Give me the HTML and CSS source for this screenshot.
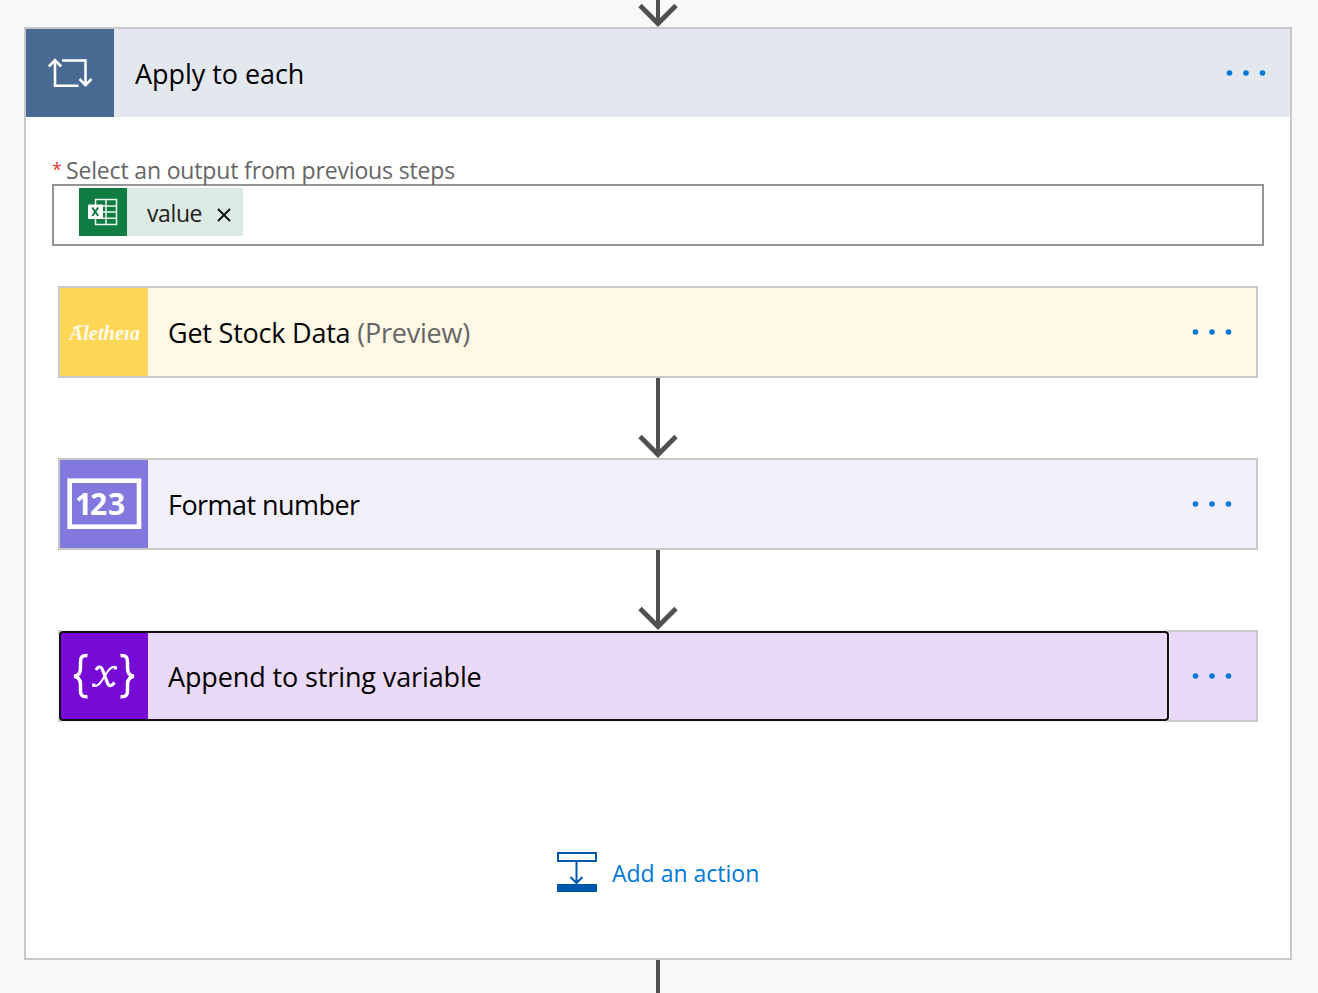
FILE: index.html
```html
<!DOCTYPE html>
<html lang="en">
<head>
<meta charset="utf-8">
<title>Flow designer</title>
<link rel="stylesheet" href="styles.css">
</head>
<body>
<main class="flow">
  <svg class="arrow arrow-in" width="40" height="27" viewBox="0 53 40 27"><path d="M20 0V76"/><path class="head" d="M2 58.500L20 76.500L38 58.500"/></svg>
  <section class="scope">
    <header class="scope-header">
      <div class="tile tile-loop">
        <svg width="88" height="88" viewBox="0 0 88 88" fill="none" stroke="#fff" stroke-width="2.600"><path d="M36 31.500H59.500V56M53.500 50L59.500 56.200L65.500 50M52.500 56.700H29V32M22.800 37.500L29 31.200L35.200 37.500"/></svg>
      </div>
      <h1 class="title t-apply">Apply to each</h1>
      <svg class="dots" width="40" height="8" viewBox="0 0 40 8"><circle cx="3.500" cy="4" r="2.800"/><circle cx="20" cy="4" r="2.800"/><circle cx="36.500" cy="4" r="2.800"/></svg>
    </header>
    <div class="scope-body">
      <div class="label"><span class="required">*</span><span class="label-text">Select an output from previous steps</span></div>
      <div class="input">
        <div class="token">
          <svg class="excel" width="48" height="48" viewBox="0 0 48 48">
            <rect width="48" height="48" fill="#107c41"/>
            <path d="M16.500 11.500H37.500V36.500H16.500ZM16.500 18H37.500M16.500 24H37.500M16.500 30.300H37.500M27 11.500V36.500" fill="none" stroke="#e9f5ed" stroke-width="1.500"/>
            <rect x="9" y="16.500" width="15" height="14.500" rx="1" fill="#fff"/>
            <path d="M13.300 19.500L19.200 28M19.200 19.500L13.300 28" stroke="#107c41" stroke-width="2"/>
          </svg>
          <span class="token-text">value</span>
          <svg class="close" width="14" height="14" viewBox="0 0 14 14"><path d="M1 1L13 13M13 1L1 13" stroke="#111" stroke-width="1.900"/></svg>
        </div>
      </div>
      <div class="steps">
        <article class="card card-stock">
          <div class="tile tile-stock"><svg width="88" height="88" viewBox="0 0 88 88"><path d="M13.500 41C14 38.300 17 37.600 23.500 38.200" fill="none" stroke="#fffbea" stroke-width="1.500"/><text class="logo" x="9.500" y="51.500" textLength="70.500" lengthAdjust="spacingAndGlyphs">Aletheıa</text></svg></div>
          <h2 class="title t-stock">Get Stock Data <span class="preview">(Preview)</span></h2>
          <svg class="dots" width="40" height="8" viewBox="0 0 40 8"><circle cx="3.500" cy="4" r="2.800"/><circle cx="20" cy="4" r="2.800"/><circle cx="36.500" cy="4" r="2.800"/></svg>
        </article>
        <svg class="arrow" width="40" height="80" viewBox="0 0 40 80"><path d="M20 0V76"/><path class="head" d="M2 58.500L20 76.500L38 58.500"/></svg>
        <article class="card card-format">
          <div class="tile tile-format"><svg width="88" height="88" viewBox="0 0 88 88"><rect x="9.700" y="20.700" width="69.300" height="46" fill="none" stroke="#fff" stroke-width="4.600"/><text class="digits" x="15 30 48" y="54.500">123</text></svg></div>
          <h2 class="title t-format">Format number</h2>
          <svg class="dots" width="40" height="8" viewBox="0 0 40 8"><circle cx="3.500" cy="4" r="2.800"/><circle cx="20" cy="4" r="2.800"/><circle cx="36.500" cy="4" r="2.800"/></svg>
        </article>
        <svg class="arrow" width="40" height="80" viewBox="0 0 40 80"><path d="M20 0V76"/><path class="head" d="M2 58.500L20 76.500L38 58.500"/></svg>
        <article class="card card-append">
          <div class="tile tile-append">
            <svg width="88" height="88" viewBox="0 0 88 88" fill="none" stroke="#fff">
              <path d="M27.500 23.500C21.500 23.200 20.500 25.500 20.500 30V36C20.500 41 19 43.800 14 44.200C19 44.800 20.500 47.500 20.500 52.500V58.500C20.500 63 21.500 65 27.500 64.700M60.500 23.500C66.500 23.200 67.500 25.500 67.500 30V36C67.500 41 69 43.800 74 44.200C69 44.800 67.500 47.500 67.500 52.500V58.500C67.500 63 66.500 65 60.500 64.700" stroke-width="3.500"/>
              <path d="M36 38C38 34.300 40.800 33.700 42.600 38L47.500 51C49 55 51.500 54.500 54.500 50.500" stroke-width="3.200"/>
              <path d="M55.500 35C51 33.500 47.500 39.500 45 43.500C42 48.500 38.500 55.500 33 53.700" stroke-width="2"/>
              <circle cx="55.300" cy="35.800" r="1.900" fill="#fff" stroke="none"/><circle cx="33.700" cy="53.100" r="1.900" fill="#fff" stroke="none"/>
            </svg>
          </div>
          <h2 class="title t-append">Append to string variable</h2>
          <svg class="dots" width="40" height="8" viewBox="0 0 40 8"><circle cx="3.500" cy="4" r="2.800"/><circle cx="20" cy="4" r="2.800"/><circle cx="36.500" cy="4" r="2.800"/></svg>
          <div class="focus-ring"></div>
        </article>
      </div>
      <div class="add-action">
        <svg width="40" height="40" viewBox="0 0 40 40" fill="none" stroke="#0058ad" stroke-width="2"><rect x="1" y="1" width="38" height="8"/><path d="M19.500 10V31M13.500 25L19.500 31L25.500 25"/><rect y="32" width="40" height="8" fill="#0058ad" stroke="none"/></svg>
        <span class="add-text">Add an action</span>
      </div>
    </div>
  </section>
  <div class="line-out"></div>
</main>
</body>
</html>
```
FILE: styles.css
```css
* { box-sizing: border-box; }
body { margin: 0; background: #f8f8f8; font-family: "Open Sans", "Noto Sans", sans-serif; }
.flow { width: 1318px; height: 993px; padding: 0 26px 0 24px; display: flex; flex-direction: column; overflow: hidden; }
.arrow { display: block; margin: 0 auto; fill: none; stroke: #505050; stroke-width: 4; flex: none; overflow: visible; }
.arrow .head { stroke-width: 4.800; }
.arrow-in { overflow: hidden; }
.scope { height: 933px; border: 2px solid #c8c8c8; background: #fff; flex: none; }
.scope-header { height: 88px; display: flex; align-items: center; background: #e3e8ef; padding-right: 24px; }
.tile { width: 88px; height: 88px; flex: none; }
.tile svg { display: block; }
.tile-loop { background: #486991; }
.tile-stock { background: #ffd656; }
.tile-format { background: #8378de; }
.tile-append { background: #770bd6; }
.title { margin: 0; padding: 2px 0 0 20px; font-size: 27px; line-height: 36px; font-weight: 400; color: #000; flex: 1; white-space: nowrap; }
.t-apply { padding-left: 21px; letter-spacing: -0.05px; }
.t-stock { letter-spacing: -0.22px; }
.t-format { letter-spacing: -0.55px; }
.t-append { letter-spacing: -0.12px; }
.preview { color: #666; }
.dots { fill: #0078d7; flex: none; }
.scope-body { padding: 37px 26px 0; }
.label { height: 30px; display: flex; color: #666; font-size: 23px; line-height: 32px; letter-spacing: -0.16px; white-space: nowrap; }
.required { color: #e43b35; width: 14px; font-size: 18px; line-height: 30px; }
.input { height: 62px; border: 2px solid #949494; padding: 2px 25px; }
.token { width: 164px; height: 48px; display: flex; align-items: center; background: #dbeae2; }
.token-text { width: 77px; padding: 2px 0 0 20px; font-size: 23px; line-height: 32px; letter-spacing: -0.4px; color: #222; }
.excel { flex: none; }
.close { margin: 6px 0 0 13px; flex: none; }
.steps { padding: 40px 6px 0; }
.card { position: relative; height: 92px; border: 2px solid #c8c8c8; display: flex; align-items: center; padding-right: 24px; }
.card-stock { background: #fff8e5; }
.card-format { background: #f1effa; }
.card-append { background: #ebdaf7; }
.focus-ring { position: absolute; left: -1px; top: -1px; width: 1110px; height: 90px; border: 2px solid #111; border-radius: 4px; box-shadow: 0 0 0 1px #f5edf9; }
.logo { font: italic 700 20px "Liberation Serif", serif; fill: #fffbea; }
.digits { font: 700 30px "Open Sans", sans-serif; fill: #fff; }
.add-action { display: flex; align-items: center; justify-content: flex-start; padding-left: 505px; margin-top: 130px; height: 40px; }
.add-text { margin-left: 15px; padding-top: 2px; color: #0078d7; font-size: 23px; line-height: 32px; white-space: nowrap; }
.line-out { width: 4px; height: 33px; margin: 0 auto; background: #505050; }
```
